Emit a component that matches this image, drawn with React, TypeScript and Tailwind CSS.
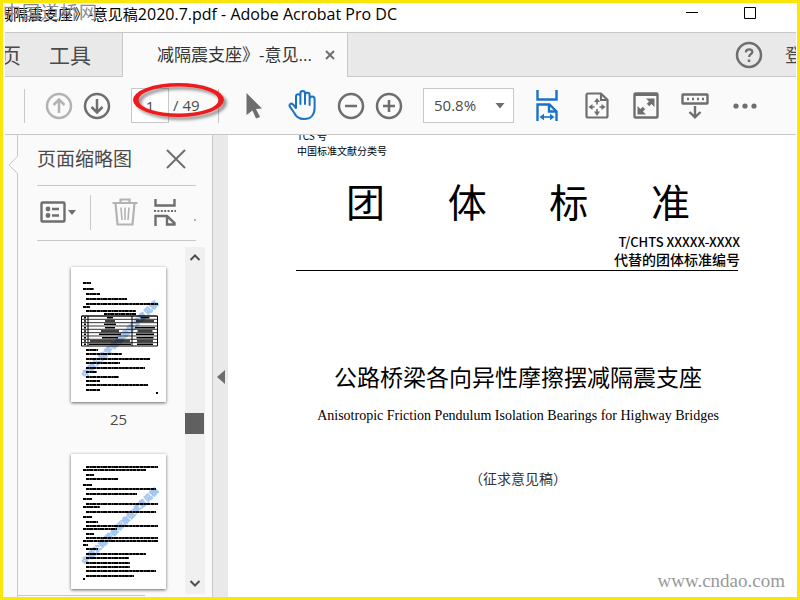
import React from 'react'

type LineSpec = [number, number, number]

type ThumbProps = {
  label: string
  lines: LineSpec[]
  hasTable?: boolean
}

const UI_FONT = "font-['Open_Sans','Noto_Sans_CJK_SC',sans-serif]"
const DOC_FONT = "font-['Noto_Sans_CJK_SC',sans-serif]"

const PAGE_25: LineSpec[] = [
  [12, 20, 16], [12, 23, 22], [15, 29, 27], [15, 56, 32], [15, 87, 37], [12, 19, 40],
  [15, 65, 44], [33, 65, 47], [15, 27, 83], [15, 51, 87], [15, 79, 92], [15, 49, 96],
  [15, 74, 101], [15, 26, 105], [15, 48, 110], [15, 29, 114], [15, 77, 118], [15, 29, 123],
  [85, 87, 126],
]

const PAGE_26: LineSpec[] = [
  [15, 87, 13], [12, 75, 16], [15, 23, 21], [15, 47, 25], [12, 21, 31], [15, 85, 35],
  [15, 66, 40], [12, 21, 45], [15, 87, 50], [12, 29, 53], [15, 85, 58], [12, 21, 63],
  [15, 27, 68], [15, 87, 72], [12, 46, 75], [15, 23, 80], [15, 87, 84], [12, 87, 87],
  [12, 17, 91], [15, 27, 95], [15, 75, 100], [15, 58, 104], [15, 59, 109], [15, 59, 113],
  [15, 85, 117], [15, 63, 122], [12, 14, 125],
]

// [left cell width, right cell width] for every row of the table on page 25
const TABLE_ROWS = [[6, 9], [10, 18], [12, 0], [10, 20], [18, 15], [22, 18], [16, 17], [40, 16], [42, 16]]

const Thumbnail: React.FC<ThumbProps> = ({ label, lines, hasTable }) => (
  <button type="button" aria-label={label} className="block h-[135px] w-[95px] bg-white shadow-[0_1px_3px_rgba(0,0,0,0.6)]">
    <svg viewBox="0 0 95 135" className="h-full w-full">
      <text
        transform="translate(14 111) rotate(-45)"
        fill="#a3c6f0"
        stroke="#a3c6f0"
        strokeWidth=".6"
        className="font-['Noto_Sans_CJK_SC',sans-serif] text-[8px] font-bold"
      >
        中国公路学会标准征求意见稿
      </text>
      <g stroke="#000" strokeWidth="1.9" strokeDasharray="3.4 .3 2.2 .2 4.3 .4">
        {lines.map(([x1, x2, y]) => (
          <path key={y} d={`M${x1} ${y}H${x2}`} />
        ))}
      </g>
      {hasTable && (
        <g stroke="#000">
          <path d="M10.5 49H86.5V79H10.5ZM17 49V79M61 49V79" fill="none" />
          {TABLE_ROWS.map(([left, right], i) => (
            <g key={i}>
              <path d={`M11 ${49 + i * 3.33}H86`} strokeWidth=".8" />
              <path
                d={`M13 ${50.7 + i * 3.33}h2M${39 - left / 2} ${50.7 + i * 3.33}h${left}M${74 - right / 2} ${50.7 + i * 3.33}h${right}`}
                strokeWidth="1.5"
              />
            </g>
          ))}
        </g>
      )}
    </svg>
  </button>
)

type CircleProps = { label: string; d: string; color: string }

const CircleButton: React.FC<CircleProps> = ({ label, d, color }) => (
  <button type="button" aria-label={label} className={`size-7 shrink-0 ${color}`}>
    <svg viewBox="0 0 28 28" fill="none" stroke="currentColor" strokeWidth="2.5">
      <circle cx="14" cy="14" r="12" />
      <path d={d} />
    </svg>
  </button>
)

const TitleBar: React.FC = () => (
  <header className="flex h-[30px] shrink-0 items-start justify-between border-b border-[#c8c8c8] bg-white">
    <h1 className="flex h-6 w-[392px] items-baseline justify-end overflow-hidden whitespace-pre text-base leading-[22px] text-black">
      <span className="text-[15px]">减隔震支座》-意见稿</span>
      2020.7.pdf - Adobe Acrobat Pro DC
    </h1>
    <div className="mr-10 flex gap-[46px] pt-1">
      <button type="button" aria-label="最小化">
        <svg viewBox="0 0 12 12" className="size-3" stroke="#000">
          <path d="M0 5.5H12" />
        </svg>
      </button>
      <button type="button" aria-label="最大化">
        <svg viewBox="0 0 12 12" className="size-3" fill="none" stroke="#000">
          <path d="M.5 .5H11.5V11.5H.5Z" />
        </svg>
      </button>
    </div>
  </header>
)

const TabBar: React.FC = () => (
  <nav className="flex h-11 shrink-0 bg-[#e9e9e9] text-[#4a4a4a]">
    <div className="flex w-[118px] shrink-0 items-center overflow-hidden border-r border-b border-[#c8c8c8] text-[21px] leading-6">
      <button type="button" className="-ml-[26px] w-[42px] shrink-0 whitespace-nowrap">主页</button>
      <button type="button" className="ml-7 shrink-0">工具</button>
    </div>
    <div className="flex w-[225px] shrink-0 items-center border-r border-[#c8c8c8] bg-[#fafafa] pl-[34px] text-[17px] text-[#333]">
      <button type="button" className="w-[156px] whitespace-nowrap text-left">减隔震支座》-意见...</button>
      <button type="button" aria-label="关闭标签" className="ml-3">
        <svg viewBox="0 0 10 10" className="size-[10px]" stroke="#6e6e6e" strokeWidth="2">
          <path d="M1 1L9 9M9 1L1 9" />
        </svg>
      </button>
    </div>
    <div className="flex min-w-0 grow items-center justify-end overflow-hidden border-b border-[#c8c8c8]">
      <button type="button" aria-label="帮助" className="mr-[22px] size-7 shrink-0">
        <svg viewBox="0 0 28 28" fill="none" stroke="#6e6e6e" strokeWidth="2.5">
          <circle cx="14" cy="14" r="12" />
          <path d="M10.8 11.3c.2-2 1.5-3 3.3-3s3.2 1 3.2 2.6c0 2.3-3.2 2.4-3.2 5.1" strokeWidth="2.3" />
          <path d="M14 18.5v2.5" />
        </svg>
      </button>
      <button type="button" className="w-[11px] overflow-hidden whitespace-nowrap text-left text-lg">登录</button>
    </div>
  </nav>
)

const PageMarker: React.FC = () => (
  <svg viewBox="0 0 100 44" className="pointer-events-none absolute -top-2 left-0 z-10 h-11 w-[100px]">
    <defs>
      <filter id="marker-shadow" x="-10%" y="-20%" width="125%" height="150%">
        <feDropShadow dx="3" dy="3" stdDeviation="1.5" floodColor="#000" floodOpacity=".4" />
      </filter>
    </defs>
    <path
      filter="url(#marker-shadow)"
      fill="#ec1c1c"
      fillRule="evenodd"
      d="M2 20a45.5 17 0 1 0 91 0a45.5 17 0 1 0-91 0ZM7.5 20a40 13.6 0 1 1 80 0a40 13.6 0 1 1-80 0Z"
    />
  </svg>
)

const Toolbar: React.FC = () => (
  <div className="flex h-[58px] shrink-0 items-center border-b border-[#c8c8c8] bg-[#fafafa] text-[15px] text-[#4a4a4a]">
    <span className="ml-[19px] h-[34px] w-px shrink-0 bg-[#c8c8c8]" />
    <div className="ml-5 flex gap-[10px]">
      <CircleButton label="上一页" color="text-[#b3b3b3]" d="M14 21V8M8.5 13L14 7.5L19.5 13" />
      <CircleButton label="下一页" color="text-[#6e6e6e]" d="M14 7V20M8.5 15L14 20.5L19.5 15" />
    </div>
    <div className="relative ml-5 flex shrink-0 items-center">
      <input
        type="text"
        aria-label="页码"
        defaultValue="1"
        className="h-[35px] w-[38px] border border-[#c8c8c8] bg-white text-center"
      />
      <span className="w-[49px] pl-1">/ 49</span>
      <span className="h-[34px] w-px bg-[#c8c8c8]" />
      <PageMarker />
    </div>
    <button type="button" aria-label="选择工具" className="ml-[27px] shrink-0">
      <svg viewBox="0 0 17 26" className="h-[26px] w-[17px]" fill="#6e6e6e">
        <path d="M.5 0L16 15.5L10 16L14 24L10 25.5L6.5 17.5L.5 22Z" />
      </svg>
    </button>
    <button type="button" aria-label="手形工具" className="ml-[25px] shrink-0">
      <svg viewBox="0 0 29 31" className="h-[31px] w-[29px]" fill="none" stroke="#1b72c4" strokeWidth="2" strokeLinejoin="round" strokeLinecap="round">
        <path d="M8 18V6.5a2.2 2.2 0 0 1 4.4 0V14M12.4 14V3.4a2.3 2.3 0 0 1 4.6 0V14M17 5a2.3 2.3 0 0 1 4.6 0V15M21.6 9a2.4 2.4 0 0 1 5 0V18c0 7-4 11-10.6 11-5 0-8-2-10-6.5L1.7 16.4c-.8-2 1.4-3.6 3-2.2L8 18" />
      </svg>
    </button>
    <div className="ml-5 flex gap-[10px]">
      <CircleButton label="缩小" color="text-[#6e6e6e]" d="M8 14H20" />
      <CircleButton label="放大" color="text-[#6e6e6e]" d="M8 14H20M14 8V20" />
    </div>
    <div className="relative ml-5 shrink-0">
      <select aria-label="缩放比例" defaultValue="50.8%" className="h-[35px] w-[91px] appearance-none border border-[#c8c8c8] bg-white pl-[10px]">
        <option>50.8%</option>
        <option>100%</option>
      </select>
      <svg viewBox="0 0 10 6" className="pointer-events-none absolute top-[15px] right-[9px] h-[6px] w-[10px]" fill="#6e6e6e">
        <path d="M.5 0H9.5L5 5.5Z" />
      </svg>
    </div>
    <button type="button" aria-label="适合宽度" className="ml-[22px] shrink-0">
      <svg viewBox="0 0 22 31" className="h-[31px] w-[22px]" fill="none" stroke="#1b72c4" strokeWidth="2.4">
        <path d="M1.5 0V9.5H20.5V0M1.5 31V14.5H13.5L20.5 21.5V31M13 14.5V21.5H20.5" />
        <path d="M5 27H17" strokeWidth="1.6" />
        <path d="M3.5 27L8 23.8V30.2ZM18.5 27L14 23.8V30.2Z" fill="#1b72c4" stroke="none" />
      </svg>
    </button>
    <button type="button" aria-label="适合整页" className="ml-[27px] shrink-0">
      <svg viewBox="0 0 24 27" className="h-[27px] w-6" fill="none" stroke="#6e6e6e" strokeWidth="2.2">
        <path d="M1.5 3a1.5 1.5 0 0 1 1.5-1.5H16L22.5 8V24a1.5 1.5 0 0 1-1.5 1.5H3a1.5 1.5 0 0 1-1.5-1.5ZM16 1.5V8H22.5" />
        <path d="M12 8V12.5M12 17V21M5.5 15H9.5M14.5 15H18.5" strokeWidth="1.6" />
        <path d="M12 6L15 10H9ZM12 24L15 19.5H9ZM3.5 15L7.5 12V18ZM20.5 15L16.5 12V18Z" fill="#6e6e6e" stroke="none" />
      </svg>
    </button>
    <button type="button" aria-label="全屏" className="ml-6 shrink-0">
      <svg viewBox="0 0 26 27" className="h-[27px] w-[26px]" fill="none" stroke="#6e6e6e" strokeWidth="2.4">
        <rect x="1.5" y="1.5" width="23" height="24" rx="1" />
        <path d="M1 2.5H25" strokeWidth="3" />
        <path d="M15 13L19 9M11 16L7 20" strokeWidth="3.4" />
        <path d="M21.5 6.5V15L13 6.5ZM4.5 22.5V14L13 22.5Z" fill="#6e6e6e" stroke="none" />
      </svg>
    </button>
    <button type="button" aria-label="键盘" className="ml-[22px] shrink-0">
      <svg viewBox="0 0 28 26" className="h-[26px] w-7" fill="none" stroke="#6e6e6e" strokeWidth="2.4">
        <rect x="1.5" y="1.5" width="25" height="9" rx=".5" />
        <path d="M6 6H23" strokeDasharray="2 3" />
        <path d="M14 13V24M8.5 19L14 24.3L19.5 19" />
      </svg>
    </button>
    <button type="button" aria-label="更多工具" className="ml-6 shrink-0">
      <svg viewBox="0 0 24 6" className="h-[6px] w-6" fill="#6e6e6e">
        <circle cx="3" cy="3" r="2.6" />
        <circle cx="12" cy="3" r="2.6" />
        <circle cx="21" cy="3" r="2.6" />
      </svg>
    </button>
  </div>
)

const ThumbnailPanel: React.FC = () => (
  <aside className="flex w-[195px] shrink-0 flex-col border-r border-[#c8c8c8] pl-[19px]">
    <div className="mr-4 flex h-[51px] shrink-0 items-center justify-between border-b border-[#c8c8c8] pr-[10px] pb-0.5">
      <h2 className="text-[19px] leading-6 text-[#4a4a4a]">页面缩略图</h2>
      <button type="button" aria-label="关闭面板">
        <svg viewBox="0 0 20 20" className="size-5" stroke="#6e6e6e" strokeWidth="2">
          <path d="M1 1L19 19M19 1L1 19" />
        </svg>
      </button>
    </div>
    <div className="mr-4 flex h-[55px] shrink-0 items-center border-b border-[#c8c8c8] pb-0.5 pl-[3px]">
      <button type="button" aria-label="选项" className="flex items-center gap-0.5">
        <svg viewBox="0 0 26 22" className="h-[22px] w-[26px]" fill="none" stroke="#6e6e6e" strokeWidth="2.4">
          <rect x="1.5" y="1.5" width="23" height="19" rx="1" />
          <path d="M12 8H19M12 14.5H19" />
          <circle cx="8" cy="8" r="2.4" fill="#6e6e6e" stroke="none" />
          <circle cx="8" cy="14.5" r="2.4" fill="#6e6e6e" stroke="none" />
        </svg>
        <svg viewBox="0 0 8 5" className="h-[5px] w-2" fill="#6e6e6e">
          <path d="M0 0H8L4 5Z" />
        </svg>
      </button>
      <span className="ml-[14px] h-[35px] w-px bg-[#c8c8c8]" />
      <button type="button" aria-label="删除页面" className="ml-[21px]">
        <svg viewBox="0 0 26 28" className="h-7 w-[26px]" fill="none" stroke="#b3b3b3" strokeWidth="2.2">
          <path d="M.5 5H25.5M8.5 5V1.5H17.5V5M3.5 5L5.5 26.5H20.5L22.5 5" />
          <path d="M9 9.5L10 22M13 9.5V22M17 9.5L16 22" strokeWidth="1.6" />
        </svg>
      </button>
      <button type="button" aria-label="拆分页面" className="ml-4">
        <svg viewBox="0 0 22 27" className="h-[27px] w-[22px]" fill="none" stroke="#6e6e6e" strokeWidth="2.4">
          <path d="M1.5 0V6.5H20.5V0M1.5 27V17H13L20.5 24V25.5H13V17" />
          <path d="M0 12H22" strokeDasharray="2 1.4" strokeWidth="1.8" />
        </svg>
      </button>
      <span className="mt-4 ml-auto size-0.5 bg-[#b3b3b3]" />
    </div>
    <div className="mt-[6px] flex min-h-0 grow overflow-hidden">
      <div className="ml-[34px] flex w-[95px] shrink-0 flex-col pt-5 text-[#4a4a4a]">
        <Thumbnail label="第 25 页" lines={PAGE_25} hasTable />
        <p className="h-[52px] pt-[7px] text-center text-[15px] leading-5">25</p>
        <Thumbnail label="第 26 页" lines={PAGE_26} />
      </div>
      <div className="ml-[19px] flex w-5 flex-col bg-[#f0f0f0]">
        <svg viewBox="0 0 20 20" className="size-5" fill="none" stroke="#505050" strokeWidth="2">
          <path d="M5.5 13L10 8.5L14.5 13" />
        </svg>
        <div className="mt-[146px] h-[21px] w-[19px] bg-[#606060]" />
        <svg viewBox="0 0 20 20" className="mt-auto size-5" fill="none" stroke="#505050" strokeWidth="2">
          <path d="M5.5 7L10 11.5L14.5 7" />
        </svg>
      </div>
    </div>
    <div className="-ml-[19px] flex h-[3px] shrink-0 items-center bg-[#fafafa]">
      <span className="h-px w-[127px] bg-[#c8c8c8]" />
    </div>
  </aside>
)

const DocumentPage: React.FC = () => (
  <main className={`min-w-0 grow overflow-hidden bg-white text-black ${DOC_FONT}`}>
    <article className="ml-[68px] w-[444px]">
      <div className="-mt-[7px] pl-px text-[10px] leading-[15px]">
        <p>TCS 号</p>
        <p>中国标准文献分类号</p>
      </div>
      <h2 className="mt-[18px] ml-[50px] flex w-[344px] justify-between text-[39px] leading-[48px]">
        <span>团</span>
        <span>体</span>
        <span>标</span>
        <span>准</span>
      </h2>
      <div className="pt-[10px] text-right font-medium">
        <p className="text-[13px] leading-4">T/CHTS XXXXX-XXXX</p>
        <p className="text-sm leading-[18px]">代替的团体标准编号</p>
      </div>
      <hr className="mt-[2px] w-[442px] border-black" />
      <h1 className="mt-[89px] text-center text-[23px] leading-8">公路桥梁各向异性摩擦摆减隔震支座</h1>
      <p className="mt-[14px] text-center font-['Liberation_Serif',serif] text-sm leading-5">
        Anisotropic Friction Pendulum Isolation Bearings for Highway Bridges
      </p>
      <p className="mt-[44px] text-center font-['Liberation_Serif','Noto_Sans_CJK_SC',serif] text-sm leading-5 text-[#333]">
        （征求意见稿）
      </p>
    </article>
  </main>
)

const App: React.FC = () => (
  <div className={`relative flex h-screen flex-col overflow-hidden border-[3px] border-[#fbe60a] bg-white pr-px pl-[2px] ${UI_FONT}`}>
    <TitleBar />
    <TabBar />
    <Toolbar />
    <div className="flex min-h-0 grow bg-[#fafafa]">
      <div className="relative w-[13px] shrink-0 border-r border-[#c8c8c8]">
        <svg viewBox="0 0 10 18" className="absolute top-[21px] -right-px h-[18px] w-[10px]" fill="#fafafa">
          <path d="M10 0L1 9L10 18" stroke="#c8c8c8" />
        </svg>
      </div>
      <ThumbnailPanel />
      <button type="button" aria-label="折叠面板" className="flex w-[15px] shrink-0 items-center justify-center bg-[#e9e9e9] pt-[22px]">
        <svg viewBox="0 0 8 14" className="h-[14px] w-2" fill="#6e6e6e">
          <path d="M8 0V14L0 7Z" />
        </svg>
      </button>
      <DocumentPage />
    </div>
    <p className="pointer-events-none absolute -top-[2px] left-0 flex gap-px font-['Noto_Sans_CJK_SC',sans-serif] text-lg leading-5 text-[#8a8a8a]">
      <span>中</span>
      <span>国</span>
      <span>道</span>
      <span>桥</span>
      <span>网</span>
    </p>
    <p className="pointer-events-none absolute right-3 bottom-1 font-['Liberation_Serif',serif] text-[19px] leading-6 text-[#999]">
      www.cndao.com
    </p>
  </div>
)

export default App
